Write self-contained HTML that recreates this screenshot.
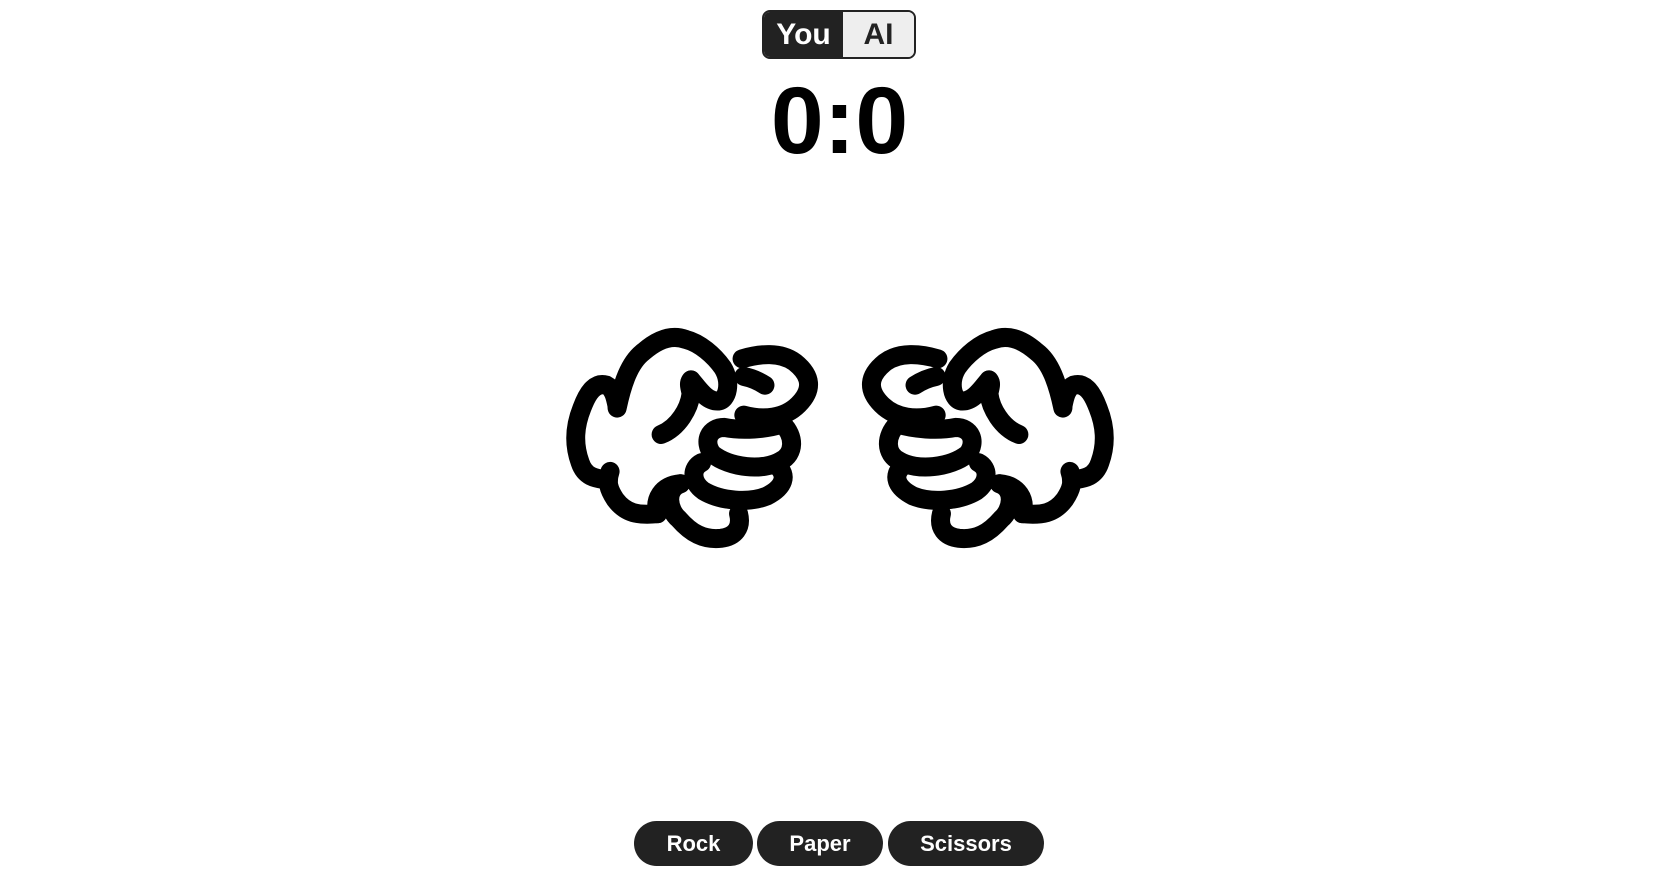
<!DOCTYPE html>
<html><head><meta charset="utf-8"><style>
html,body{margin:0;padding:0;background:#fff;width:1679px;height:885px;overflow:hidden;font-family:"Liberation Sans",sans-serif}
.tog{position:absolute;left:762px;top:10px;border:2px solid #222;border-radius:8px;overflow:hidden;display:flex;box-sizing:border-box;width:154px;height:49px}
.tog div{display:flex;align-items:center;justify-content:center;font-weight:bold;font-size:30px}
.you{background:#222;color:#fff;width:79px}
.ai{background:#eee;color:#222;flex:1}
.score{position:absolute;left:0;width:1679px;top:74px;text-align:center;font-weight:bold;font-size:95px;line-height:95px;color:#000}
.btn{position:absolute;top:821px;height:45px;background:#222;color:#fff;border-radius:23px;font-weight:bold;font-size:22px;display:flex;align-items:center;justify-content:center}
svg{position:absolute;left:0;top:0}
</style></head><body>
<div class="tog"><div class="you">You</div><div class="ai">AI</div></div>
<div class="score">0:0</div>
<svg width="1679" height="885" viewBox="0 0 1679 885">
<defs>
<g id="fist" fill="none" stroke="#000" stroke-width="54" stroke-linecap="round" stroke-linejoin="round">
<path d="M185,290 C200,220 220,160 260,130 C300,95 340,80 380,95 C420,105 460,140 485,175 C510,215 500,270 470,270 C440,270 420,240 395,210"/>
<path d="M395,210 C385,220 395,240 395,250 C390,290 360,345 310,365"/>
<path d="M185,285 C180,260 175,235 155,225 C120,215 100,250 85,290 C65,340 60,390 80,445 C95,490 130,490 160,495"/>
<path d="M165,470 C155,500 160,520 180,550 C210,590 245,595 300,590"/>
<path d="M540,150 C590,135 650,130 690,160 C740,200 740,240 700,280 C660,320 600,325 545,310"/>
<path d="M605,225 C590,215 570,205 545,200"/>
<path d="M455,420 C430,385 445,345 490,345 C540,355 610,350 655,335 C690,370 690,420 650,440 C600,470 505,460 455,420"/>
<path d="M425,445 C395,460 395,500 430,525 C480,555 560,560 610,540 C660,515 670,480 640,455"/>
<path d="M365,505 C320,520 330,580 360,605 C395,645 430,665 480,660 C520,655 540,630 530,590"/>
<path d="M300,590 C290,550 310,510 365,505"/>
</g>
</defs>
<g transform="translate(552 306) scale(0.352)"><use href="#fist"/></g>
<g transform="translate(1680 0) scale(-1 1)"><g transform="translate(552 306) scale(0.352)"><use href="#fist"/></g></g>
</svg>
<div class="btn" style="left:634px;width:119px">Rock</div>
<div class="btn" style="left:757px;width:126px">Paper</div>
<div class="btn" style="left:888px;width:156px">Scissors</div>
</body></html>
